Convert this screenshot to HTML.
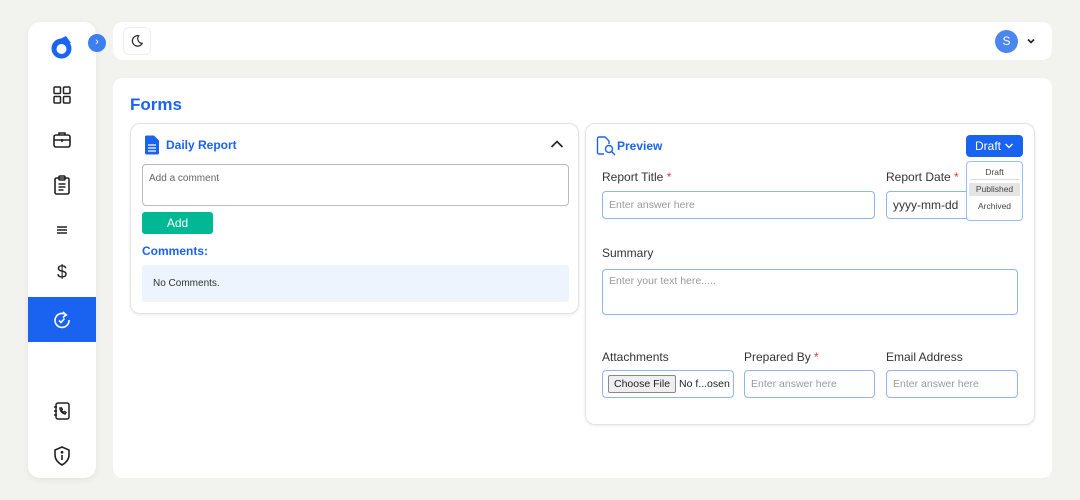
<!DOCTYPE html>
<html><head><style>
*{box-sizing:border-box;margin:0;padding:0}
body{width:1080px;height:500px;background:#f2f2ee;font-family:"Liberation Sans",sans-serif;position:relative;overflow:hidden}
.abs{position:absolute}
.side{left:28px;top:22px;width:68px;height:456px;background:#fff;border-radius:12px;box-shadow:0 2px 8px rgba(0,0,0,.06)}
.ic{position:absolute;left:22px;width:24px;height:24px}
.top{left:113px;top:22px;width:939px;height:38px;background:#fff;border-radius:10px}
.main{left:113px;top:78px;width:939px;height:400px;background:#fff;border-radius:10px}
.card{background:#fff;border:1px solid #e3e3e3;border-radius:10px;box-shadow:0 1px 3px rgba(0,0,0,.08)}
.lbl{font-size:12px;color:#333;white-space:nowrap}
.inp{border:1px solid #8fb4f5;border-radius:4px;background:#fff;font-size:10.5px;color:#9a9a9a;padding-left:6px;display:flex;align-items:center;white-space:nowrap;overflow:hidden}
.star{color:#e53935}
</style></head><body>
<div class="abs side">
  <svg class="abs" style="left:22px;top:12px" width="24" height="26" viewBox="0 0 24 26"><circle cx="11.5" cy="14.5" r="10" fill="#1a66f0"/><path d="M11 4.5 L16 2 L21 9 L17 10 Z" fill="#1a66f0"/><circle cx="11.5" cy="15" r="5" fill="#fff"/></svg>
  <svg class="ic" style="top:61px" viewBox="0 0 24 24" fill="none" stroke="#222" stroke-width="1.5"><rect x="4" y="4" width="6.5" height="6.5" rx="1"/><rect x="13.5" y="4" width="6.5" height="6.5" rx="1"/><rect x="4" y="13.5" width="6.5" height="6.5" rx="1"/><rect x="13.5" y="13.5" width="6.5" height="6.5" rx="1"/></svg>
  <svg class="ic" style="top:106px" viewBox="0 0 24 24" fill="none" stroke="#222" stroke-width="1.6"><rect x="4" y="7" width="16" height="12" rx="2"/><path d="M9 7V5h6v2M4 12h16M12 11v3"/></svg>
  <svg class="ic" style="top:151px" viewBox="0 0 24 24" fill="none" stroke="#222" stroke-width="1.6"><rect x="5" y="5" width="14" height="16" rx="1.5"/><rect x="9" y="3" width="6" height="4" rx="1"/><path d="M8.5 11h7M8.5 14h7M8.5 17h5"/></svg>
  <svg class="ic" style="top:196px" viewBox="0 0 24 24" fill="none" stroke="#222" stroke-width="1.6"><path d="M7 9h10M7 12h10M7 15h10"/></svg>
  <div class="abs" style="left:0;top:240px;width:68px;text-align:center;font-size:18px;color:#222">$</div>
  <div class="abs" style="left:0;top:275px;width:68px;height:45px;background:#1a63f0"></div>
  <svg class="ic" style="top:286px" viewBox="0 0 24 24" fill="none" stroke="#fff" stroke-width="1.6"><path d="M17 7.5A7 7 0 1 0 19 12"/><path d="M13 4l3 3-3 2.5"/><path d="M9 12.5l2 2 3.5-4"/></svg>
  <svg class="ic" style="top:377px" viewBox="0 0 24 24" fill="none" stroke="#222" stroke-width="1.5"><rect x="6" y="4" width="13" height="16" rx="2"/><path d="M4 8h3M4 12h3M4 16h3"/><path d="M10 9c0 3 2 5 5 6l1-1.5-1.5-1-1 .8c-1-.5-1.6-1.2-2-2l.8-1-1-1.5z"/></svg>
  <svg class="ic" style="top:422px" viewBox="0 0 24 24" fill="none" stroke="#222" stroke-width="1.6"><path d="M12 3l7 3v5c0 5-3.5 8-7 10-3.5-2-7-5-7-10V6z"/><path d="M12 11v5"/><circle cx="12" cy="8.3" r=".6" fill="#222"/></svg>
</div>
<div class="abs" style="left:88px;top:34px;width:18px;height:18px;border-radius:50%;background:#3b7ff0;color:#fff;font-size:11px;text-align:center;line-height:17px">›</div>
<div class="abs top">
  <div class="abs" style="left:10px;top:5px;width:28px;height:28px;border:1px solid #eee;border-radius:6px"></div>
  <svg class="abs" style="left:17px;top:12px" width="14" height="14" viewBox="0 0 24 24" fill="none" stroke="#222" stroke-width="2"><path d="M15 3a9 9 0 1 0 6 13A8 8 0 0 1 15 3z"/></svg>
  <div class="abs" style="left:882px;top:8px;width:23px;height:23px;border-radius:50%;background:#4a86ee;color:#fff;font-size:12px;text-align:center;line-height:23px">S</div>
  <svg class="abs" style="left:913px;top:14px" width="10" height="10" viewBox="0 0 10 10" fill="none" stroke="#222" stroke-width="1.6"><path d="M2 3.5l3 3 3-3"/></svg>
</div>
<div class="abs main">
  <div class="abs" style="left:17px;top:17px;font-size:17px;font-weight:bold;color:#1a63f0">Forms</div>
  <div class="abs card" style="left:17px;top:45px;width:449px;height:191px">
    <svg class="abs" style="left:13px;top:11px" width="16" height="20" viewBox="0 0 16 20"><path d="M1 2a1.5 1.5 0 0 1 1.5-1.5H10L15 5.5V18a1.5 1.5 0 0 1-1.5 1.5h-11A1.5 1.5 0 0 1 1 18z" fill="#1a63f0"/><path d="M4 10h8M4 13h8M4 16h8" stroke="#fff" stroke-width="1.2"/></svg>
    <div class="abs" style="left:35px;top:14px;font-size:12px;font-weight:bold;color:#1a63f0">Daily Report</div>
    <svg class="abs" style="left:419px;top:15px" width="14" height="10" viewBox="0 0 14 10" fill="none" stroke="#222" stroke-width="1.6"><path d="M1.5 8l5.5-5.5L12.5 8"/></svg>
    <div class="abs" style="left:11px;top:40px;width:427px;height:42px;border:1px solid #bbb;border-radius:4px;font-size:10px;color:#666;padding:8px 6px">Add a comment</div>
    <div class="abs" style="left:11px;top:88px;width:71px;height:22px;background:#00b894;border-radius:3px;color:#fff;font-size:12px;text-align:center;line-height:22px">Add</div>
    <div class="abs" style="left:11px;top:120px;font-size:12px;font-weight:bold;color:#1a63f0">Comments:</div>
    <div class="abs" style="left:11px;top:141px;width:427px;height:37px;background:#eef4fd;border-radius:3px;font-size:10px;color:#333;padding:13px 11px">No Comments.</div>
  </div>
  <div class="abs card" style="left:472px;top:45px;width:450px;height:302px">
    <svg class="abs" style="left:10px;top:12px" width="20" height="20" viewBox="0 0 20 20" fill="none" stroke="#1a63f0" stroke-width="1.4"><path d="M8 18H3a1.5 1.5 0 0 1-1.5-1.5v-14A1.5 1.5 0 0 1 3 1h6l4 4v3"/><circle cx="13" cy="13" r="3.5"/><path d="M15.5 15.5L19 19"/></svg>
    <div class="abs" style="left:31px;top:15px;font-size:12px;font-weight:bold;color:#1a63f0">Preview</div>
    <div class="abs" style="left:380px;top:11px;width:57px;height:22px;background:#1a63f0;border-radius:4px;color:#fff;font-size:12px;line-height:22px;padding-left:9px">Draft</div>
    <svg class="abs" style="left:418px;top:18px" width="10" height="8" viewBox="0 0 10 8" fill="none" stroke="#fff" stroke-width="1.3"><path d="M1.5 2l3.5 3.5L8.5 2"/></svg>
    <div class="lbl abs" style="left:16px;top:46px">Report Title <span class="star">*</span></div>
    <div class="abs inp" style="left:16px;top:67px;width:273px;height:28px">Enter answer here</div>
    <div class="lbl abs" style="left:300px;top:46px">Report Date <span class="star">*</span></div>
    <div class="abs inp" style="left:300px;top:67px;width:90px;height:28px;color:#333;font-size:12px">yyyy-mm-dd</div>
    <div class="abs" style="left:380px;top:37px;width:57px;height:60px;background:#fff;border:1px solid #9bbcf5;border-radius:4px;font-size:8.5px;color:#444;text-align:center">
      <div style="padding-top:5px;height:18px;border-bottom:1px solid #ddd;margin:0 3px">Draft</div>
      <div style="margin:3px 2px 0;background:#e5e5e5;height:13px;line-height:13px">Published</div>
      <div style="margin-top:5px">Archived</div>
    </div>
    <div class="lbl abs" style="left:16px;top:122px">Summary</div>
    <div class="abs inp" style="left:16px;top:145px;width:416px;height:46px;align-items:flex-start;padding-top:5px">Enter your text here.....</div>
    <div class="lbl abs" style="left:16px;top:226px">Attachments</div>
    <div class="abs inp" style="left:16px;top:246px;width:132px;height:28px;padding-left:5px;color:#222;font-size:10.5px"><span style="background:#efefef;border:1px solid #888;border-radius:2px;padding:2px 5px;margin-right:3px;white-space:nowrap">Choose File</span>No f...osen</div>
    <div class="lbl abs" style="left:158px;top:226px">Prepared By <span class="star">*</span></div>
    <div class="abs inp" style="left:158px;top:246px;width:131px;height:28px">Enter answer here</div>
    <div class="lbl abs" style="left:300px;top:226px">Email Address</div>
    <div class="abs inp" style="left:300px;top:246px;width:132px;height:28px">Enter answer here</div>
  </div>
</div>
</body></html>
